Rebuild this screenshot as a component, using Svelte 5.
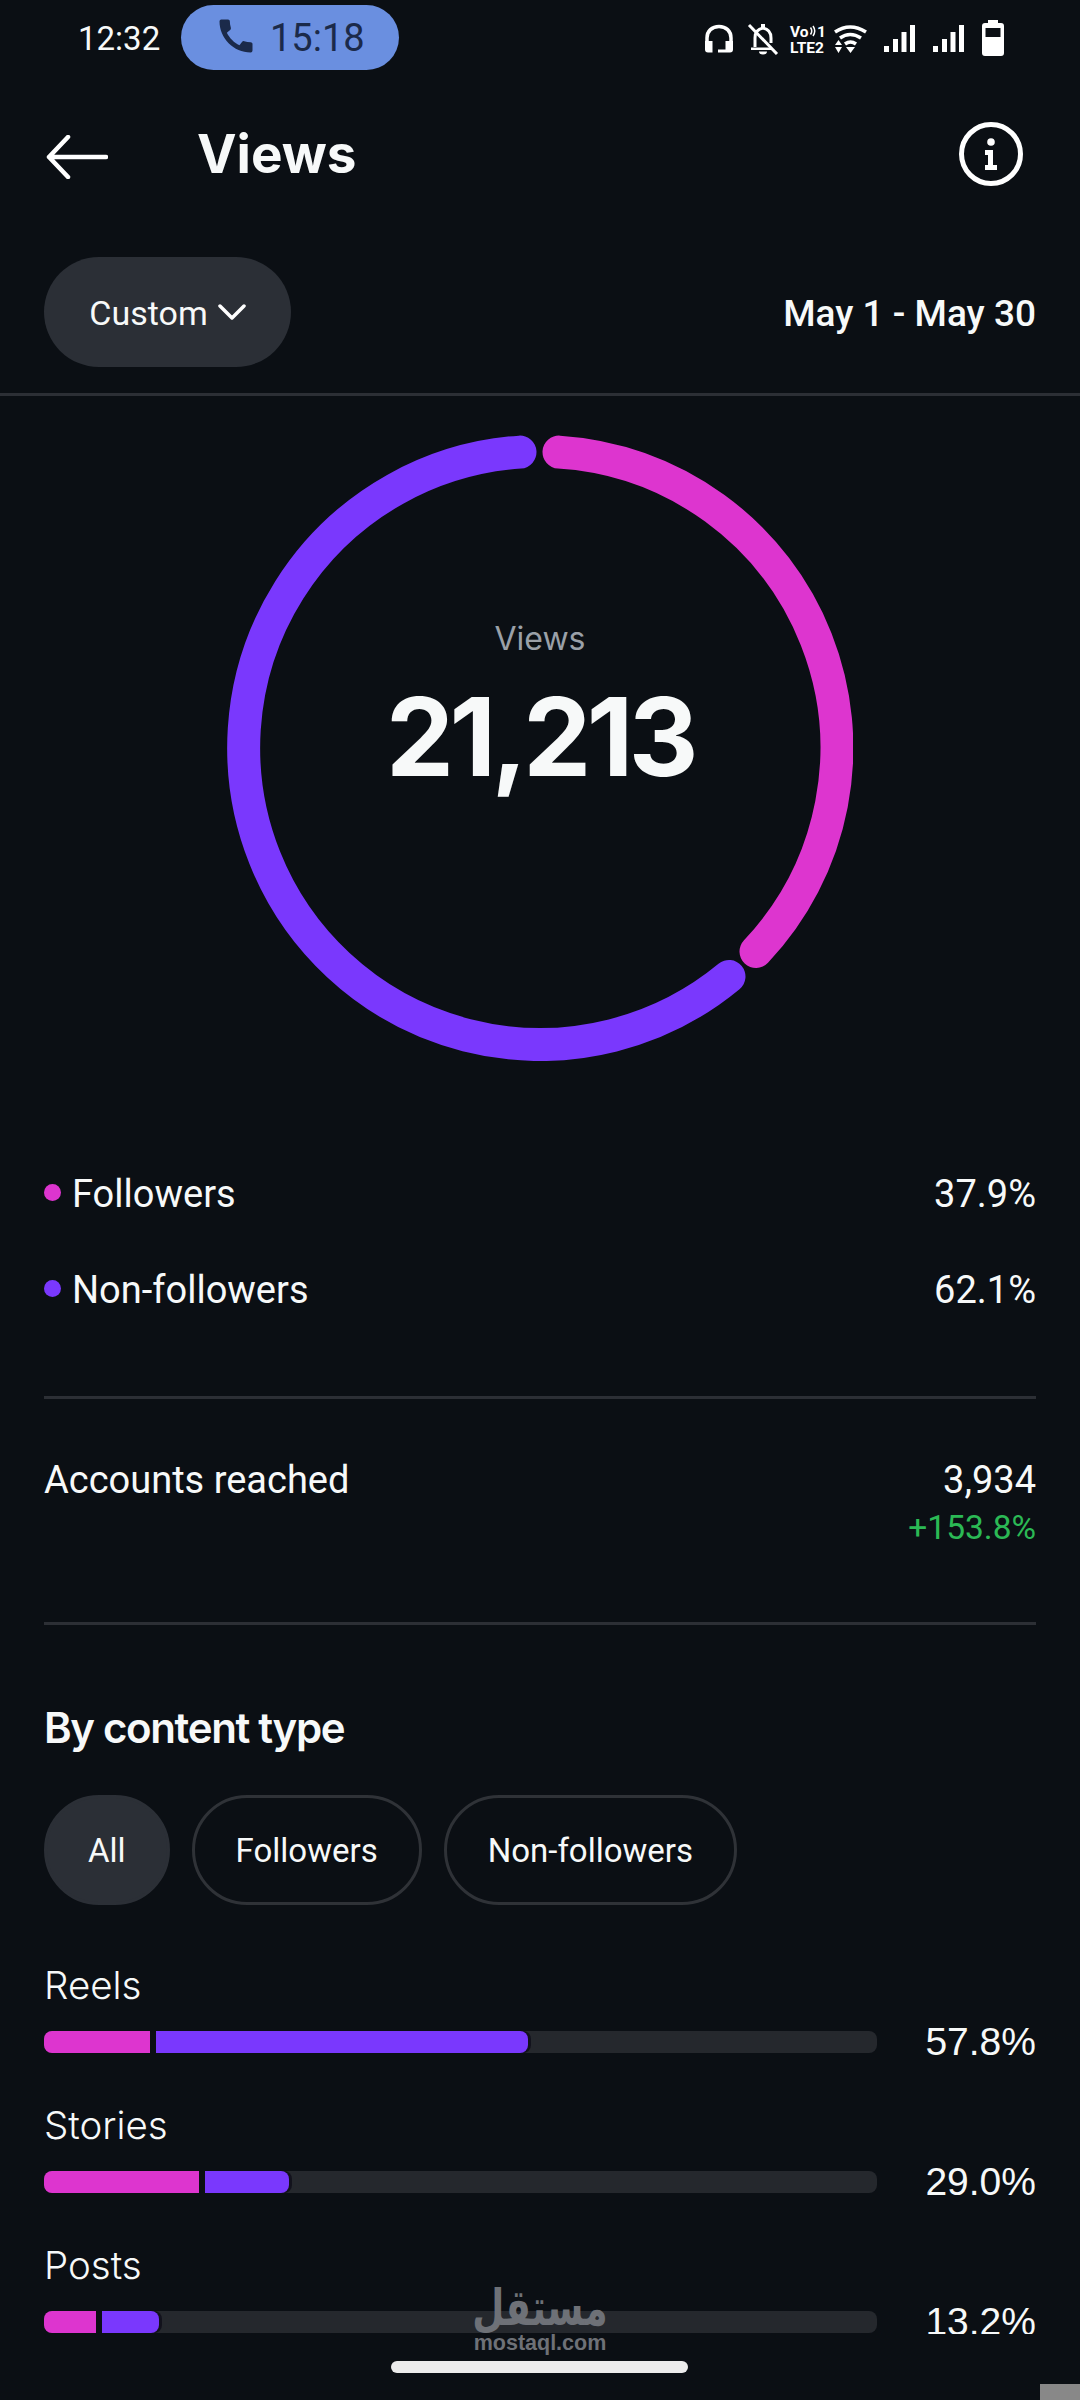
<script>
	const legend = [
		{ label: "Followers", value: "37.9%", color: "#dd35cf" },
		{ label: "Non-followers", value: "62.1%", color: "#7a38fd" }
	];

	const filters = ["All", "Followers", "Non-followers"];

	const rows = [
		{ label: "Reels", value: "57.8%", pink: 112, purple: 372 },
		{ label: "Stories", value: "29.0%", pink: 161, purple: 84 },
		{ label: "Posts", value: "13.2%", pink: 58, purple: 57 }
	];
</script>

<div class="page">
	<div class="scroll">
		<div class="status">
			<span class="clock">12:32</span>
			<div class="call">
				<svg class="phone" viewBox="0 0 24 24" width="44" height="44">
					<path fill="#1b2a4a" d="M20.01 15.38c-1.23 0-2.42-.2-3.53-.56-.35-.12-.74-.03-1.01.24l-1.57 1.97c-2.83-1.35-5.48-3.9-6.89-6.83l1.95-1.66c.27-.28.35-.67.24-1.02-.37-1.11-.56-2.3-.56-3.53 0-.54-.45-.99-.99-.99H4.19C3.65 3 3 3.24 3 3.99 3 13.28 10.73 21 20.01 21c.71 0 .99-.63.99-1.18v-3.45c0-.54-.45-.99-.99-.99z" />
				</svg>
				<span>15:18</span>
			</div>
			<div class="status-icons">
				<svg class="headset" viewBox="0 0 30 30" width="30" height="30">
					<path d="M3 20V14C3 7 8 2.500 15 2.500S27 7 27 14v6" fill="none" stroke="#fff" stroke-width="3.500" />
					<path d="M1 17h7.500v11.500H4Q1 28.500 1 25.500zM29 17h-7.500v11.500H26q3 0 3-3zM14 25.500h7.500v3H14z" fill="#fff" />
				</svg>
				<svg class="bell" viewBox="0 0 32 32" width="32" height="32">
					<path d="M8 24V15c0-5.500 3-9 8-10 5 1 8 4.500 8 10v5" fill="none" stroke="#fff" stroke-width="3" />
					<path d="M4 24.500h20v2.500H4zM12 28.500h8a4 3 0 0 1-8 0zM14 1h4v5h-4z" fill="#fff" />
					<path d="M2 2l28 29" stroke="#fff" stroke-width="3" />
				</svg>
				<svg class="volte" viewBox="0 0 38 30" width="38" height="30">
					<text x="0" y="13" class="vo">Vo</text>
					<path d="M20.500 3.500q2.500 3.500 0 7M23 2q3.500 5 0 10" fill="none" stroke="#fff" stroke-width="1.500" />
					<text x="27" y="13" class="vo">1</text>
					<text x="0" y="29" class="vo">LTE2</text>
				</svg>
				<svg class="wifi" viewBox="0 0 33 30" width="33" height="30">
					<path d="M1 8q15-10 31 0M6 14q10-7 21 0M11 20q5.500-4 11 0" fill="none" stroke="#fff" stroke-width="3.500" />
					<path d="M12 23h9l-4.500 6zM1 21h7l-3.500-5zM1 23h7l-3.500 6z" fill="#fff" />
				</svg>
				<svg class="bars" viewBox="0 0 31 30" width="31" height="30">
					<path d="M0 22h5v6H0zM9 15h5v13H9zM17.500 8h5v20h-5zM26 1h5v27h-5z" fill="#fff" />
				</svg>
				<svg class="bars" viewBox="0 0 31 30" width="31" height="30">
					<path d="M0 22h5v6H0zM9 15h5v13H9zM17.500 8h5v20h-5zM26 1h5v27h-5z" fill="#fff" />
				</svg>
				<svg class="battery" viewBox="0 0 22 36" width="22" height="36">
					<path fill="#fff" fill-rule="evenodd" d="M6 0h10v3h3q3 0 3 3v27q0 3-3 3H3q-3 0-3-3V6q0-3 3-3h3zM3.500 8v9h15V8z" />
				</svg>
			</div>
		</div>

		<header class="topbar">
			<svg class="back" viewBox="0 0 62 44" width="62" height="44">
				<path d="M60 22H3M22 2L3 22l19 20" fill="none" stroke="#fff" stroke-width="4.500" stroke-linecap="round" stroke-linejoin="round" />
			</svg>
			<h1>Views</h1>
			<svg class="info" viewBox="0 0 64 64" width="64" height="64">
				<circle cx="32" cy="32" r="29.500" fill="none" stroke="#fff" stroke-width="5" />
				<circle cx="32" cy="20" r="3.800" fill="#fff" />
				<path d="M26 28h8v15h4v5H26v-5h3v-10h-3z" fill="#fff" />
			</svg>
		</header>

		<div class="toolbar">
			<div class="dropdown">
				<span>Custom</span>
				<svg viewBox="0 0 28 17" width="28" height="17">
					<path d="M2 2l12 12L26 2" fill="none" stroke="#fff" stroke-width="3.500" stroke-linecap="round" stroke-linejoin="round" />
				</svg>
			</div>
			<span class="dates">May 1 - May 30</span>
		</div>

		<div class="ring-wrap">
			<svg viewBox="0 0 626 626" width="626" height="626">
				<g transform="translate(-227 -435.500)" fill="none" stroke-width="33" stroke-linecap="round">
					<path stroke="#dd35cf" d="M559 452.600A296.500 296.500 0 0 1 756 952" />
					<path stroke="#7a38fd" d="M729 977A296.500 296.500 0 1 1 520 452.600" />
				</g>
			</svg>
			<div class="ring-label">
				<span class="ring-title">Views</span>
				<span class="ring-value">21,213</span>
			</div>
		</div>

		<div class="legend">
			{#each legend as item}
				<div class="legend-row">
					<span class="dot" style="background: {item.color}"></span>
					<span class="legend-name">{item.label}</span>
					<span class="legend-value">{item.value}</span>
				</div>
			{/each}
		</div>

		<div class="reach">
			<span>Accounts reached</span>
			<div class="reach-nums">
				<span>3,934</span>
				<span class="delta">+153.8%</span>
			</div>
		</div>

		<section class="types">
			<h2>By content type</h2>
			<div class="filters">
				{#each filters as f, i}
					<span class="chip" class:active={i === 0}>{f}</span>
				{/each}
			</div>
			{#each rows as row}
				<div class="type-row">
					<span class="type-name">{row.label}</span>
					<div class="track">
						<div class="pink" style="width: {row.pink}px"></div>
						<div class="purple" style="width: {row.purple}px"></div>
					</div>
					<span class="type-value">{row.value}</span>
				</div>
			{/each}
		</section>
	</div>

	<div class="watermark">
		<span class="wm-ar">مستقل</span>
		<span class="wm-en">mostaql.com</span>
	</div>
	<div class="home-bar"></div>
	<div class="corner"></div>
</div>

<style>
	:global(body) {
		background: #0b0f14;
	}

	.page {
		position: relative;
		width: 1080px;
		height: 2400px;
		overflow: hidden;
		background: #0b0f14;
		color: #f7f9f9;
		font-family: Roboto, sans-serif;
	}

	.scroll {
		height: 2334px;
		overflow: hidden;
	}

	.status {
		height: 71px;
		padding: 5px 0 0 78px;
		display: flex;
		align-items: flex-start;
	}

	.clock {
		font-size: 33px;
		line-height: 68px;
		width: 103px;
	}

	.call {
		width: 218px;
		height: 65px;
		border-radius: 33px;
		background: #6a8fe0;
		color: #1b2a4a;
		display: flex;
		align-items: center;
		font-size: 38px;
		box-sizing: border-box;
		padding: 0 0 0 33px;
		gap: 12px;
	}

	.phone {
		margin-top: -4px;
	}

	.status-icons {
		margin-top: 19px;
		display: flex;
		align-items: flex-start;
	}

	.headset {
		margin-left: 305px;
	}

	.bell {
		margin-top: -1px;
		margin-left: 13px;
	}

	.volte {
		margin-left: 11px;
		overflow: visible;
	}

	.vo {
		font: 700 15.500px Roboto, sans-serif;
		fill: #fff;
	}

	.wifi {
		margin-left: 6px;
	}

	.bars {
		margin-left: 17px;
	}

	.bars + .bars {
		margin-left: 18px;
	}

	.battery {
		margin-top: -4px;
		margin-left: 18px;
	}

	.topbar {
		height: 156px;
		display: flex;
		align-items: center;
		padding: 0 57px 0 46px;
	}

	.back {
		margin-top: 5px;
	}

	.topbar h1 {
		margin: 0 0 0 89px;
		font: 700 53px/1 Inter, sans-serif;
		flex: 1;
	}

	.toolbar {
		height: 164px;
		box-sizing: border-box;
		padding: 25px 44px 0;
		display: flex;
		justify-content: space-between;
		border-bottom: 3px solid #2c2f35;
	}

	.dropdown {
		width: 247px;
		height: 110px;
		border-radius: 55px;
		background: #2b2f36;
		display: flex;
		align-items: center;
		justify-content: center;
		gap: 10px;
		font-size: 34px;
	}

	.dropdown span {
		padding-top: 2px;
	}

	.dates {
		font-size: 37px;
		font-weight: 500;
		line-height: 114px;
	}

	.ring-wrap {
		position: relative;
		width: 626px;
		height: 626px;
		margin: 39px auto 0;
	}

	.ring-wrap svg {
		display: block;
	}

	.ring-label {
		position: absolute;
		top: 182px;
		left: 0;
		right: 0;
		display: flex;
		flex-direction: column;
		align-items: center;
		font-family: Inter, sans-serif;
	}

	.ring-title {
		font-size: 32px;
		line-height: 44px;
		color: #9aa0a8;
	}

	.ring-value {
		font-size: 108px;
		font-weight: 700;
		letter-spacing: -4.500px;
		line-height: 120px;
		margin-top: 16px;
	}

	.legend {
		margin-top: 85px;
		padding: 0 44px 58px;
		height: 192px;
	}

	.legend-row {
		height: 96px;
		display: flex;
		align-items: center;
		font-size: 38px;
	}

	.dot {
		width: 17px;
		height: 17px;
		border-radius: 50%;
		margin: -3px 11px 0 0;
	}

	.legend-name {
		flex: 1;
	}

	.reach {
		margin: 0 44px;
		padding: 59px 0 72px;
		height: 229px;
		box-sizing: border-box;
		border-top: 3px solid #2c2f35;
		border-bottom: 3px solid #2c2f35;
		display: flex;
		justify-content: space-between;
		font-size: 38px;
		line-height: 44px;
	}

	.reach-nums {
		display: flex;
		flex-direction: column;
		align-items: flex-end;
	}

	.delta {
		font-size: 33.500px;
		color: #2bb955;
		margin-top: 4px;
	}

	.types {
		padding: 77px 44px 0;
	}

	.types h2 {
		margin: 0;
		font: 600 42px/52px Inter, sans-serif;
		letter-spacing: -1.350px;
	}

	.filters {
		margin-top: 41px;
		margin-bottom: 58px;
		display: flex;
		gap: 22px;
	}

	.chip {
		height: 110px;
		box-sizing: border-box;
		border: 3px solid #2f3237;
		border-radius: 55px;
		padding: 0 41px;
		display: flex;
		align-items: center;
		font-size: 33px;
	}

	.chip.active {
		background: #2b2f36;
		border-color: #2b2f36;
	}

	.type-row {
		display: grid;
		grid-template-columns: 833px 1fr;
		row-gap: 24px;
		align-items: center;
		margin-bottom: 50px;
	}

	.type-name {
		grid-column: 1 / 3;
		font: 300 38.500px/44px Inter, sans-serif;
	}

	.track {
		height: 22px;
		border-radius: 8px;
		background: #25282d;
		display: flex;
		overflow: hidden;
	}

	.pink {
		box-sizing: border-box;
		background: #dd35cf;
		border-right: 6px solid #0b0f14;
	}

	.purple {
		background: #7a38fd;
		border-radius: 0 8px 8px 0;
		box-shadow: 3px 0 0 #12121c;
	}

	.type-value {
		text-align: right;
		font: 400 39px/22px "Liberation Sans", sans-serif;
	}

	.watermark {
		position: absolute;
		left: 440px;
		width: 200px;
		top: 2286px;
		display: flex;
		flex-direction: column;
		align-items: center;
		color: #6e7177;
	}

	.wm-ar {
		font: 700 37px/46px "DejaVu Sans", sans-serif;
		transform: scaleY(1.35);
	}

	.wm-en {
		font: 700 21.500px/22px "Liberation Sans", sans-serif;
	}

	.home-bar {
		position: absolute;
		left: 391px;
		top: 2361px;
		width: 297px;
		height: 12px;
		border-radius: 6px;
		background: #ececec;
	}

	.corner {
		position: absolute;
		right: 0;
		bottom: 0;
		width: 40px;
		height: 16px;
		background: #888;
	}
</style>
